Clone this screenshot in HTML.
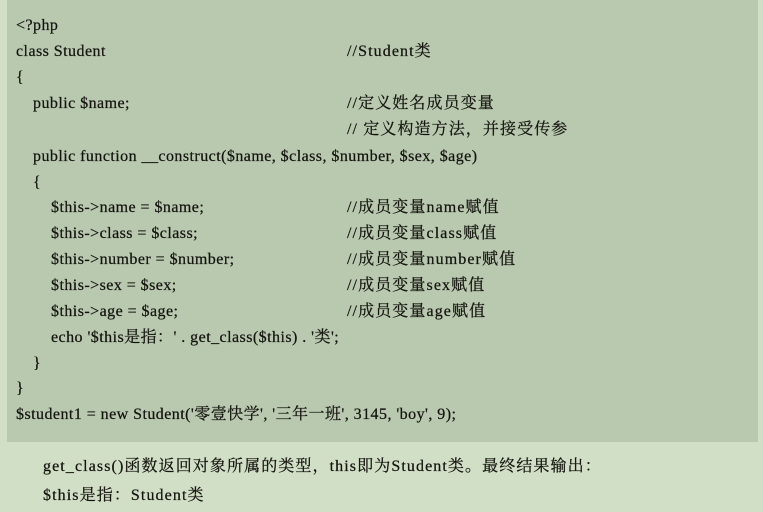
<!DOCTYPE html>
<html><head><meta charset="utf-8"><style>
html,body{margin:0;padding:0;}
body{width:763px;height:512px;background:#d2dfc7;position:relative;overflow:hidden;font-family:"Liberation Serif","Noto Serif CJK SC",serif;font-size:16px;letter-spacing:0.45px;color:#15150f;-webkit-text-stroke:0.25px #15150f;}
.box{position:absolute;left:7px;top:0;width:751px;height:442px;background:#b9c9b0;}
.l{position:absolute;white-space:pre;line-height:20px;}
.c{letter-spacing:1.1px;}
.b{letter-spacing:1.1px;}
</style></head><body>
<div class="box"></div>
<div class="l" style="left:16px;top:16px">&lt;?php</div>
<div class="l" style="left:16px;top:42px">class Student</div>
<div class="l c" style="left:347px;top:42px">//Student类</div>
<div class="l" style="left:16px;top:68px">{</div>
<div class="l" style="left:33px;top:94px">public $name;</div>
<div class="l c" style="left:347px;top:94px">//定义姓名成员变量</div>
<div class="l c" style="left:347px;top:120px">// 定义构造方法，并接受传参</div>
<div class="l" style="left:33px;top:147px">public function __construct($name, $class, $number, $sex, $age)</div>
<div class="l" style="left:33px;top:173px">{</div>
<div class="l" style="left:51px;top:198px">$this-&gt;name = $name;</div>
<div class="l c" style="left:347px;top:198px">//成员变量name赋值</div>
<div class="l" style="left:51px;top:224px">$this-&gt;class = $class;</div>
<div class="l c" style="left:347px;top:224px">//成员变量class赋值</div>
<div class="l" style="left:51px;top:250px">$this-&gt;number = $number;</div>
<div class="l c" style="left:347px;top:250px">//成员变量number赋值</div>
<div class="l" style="left:51px;top:276px">$this-&gt;sex = $sex;</div>
<div class="l c" style="left:347px;top:276px">//成员变量sex赋值</div>
<div class="l" style="left:51px;top:302px">$this-&gt;age = $age;</div>
<div class="l c" style="left:347px;top:302px">//成员变量age赋值</div>
<div class="l" style="left:51px;top:328px">echo '$this是指：' . get_class($this) . '类';</div>
<div class="l" style="left:33px;top:354px">}</div>
<div class="l" style="left:16px;top:379px">}</div>
<div class="l" style="left:16px;top:405px">$student1 = new Student('零壹快学', '三年一班', 3145, 'boy', 9);</div>
<div class="l b" style="left:43px;top:457px">get_class()函数返回对象所属的类型，this即为Student类。最终结果输出：</div>
<div class="l b" style="left:43px;top:486px">$this是指：Student类</div>
</body></html>
